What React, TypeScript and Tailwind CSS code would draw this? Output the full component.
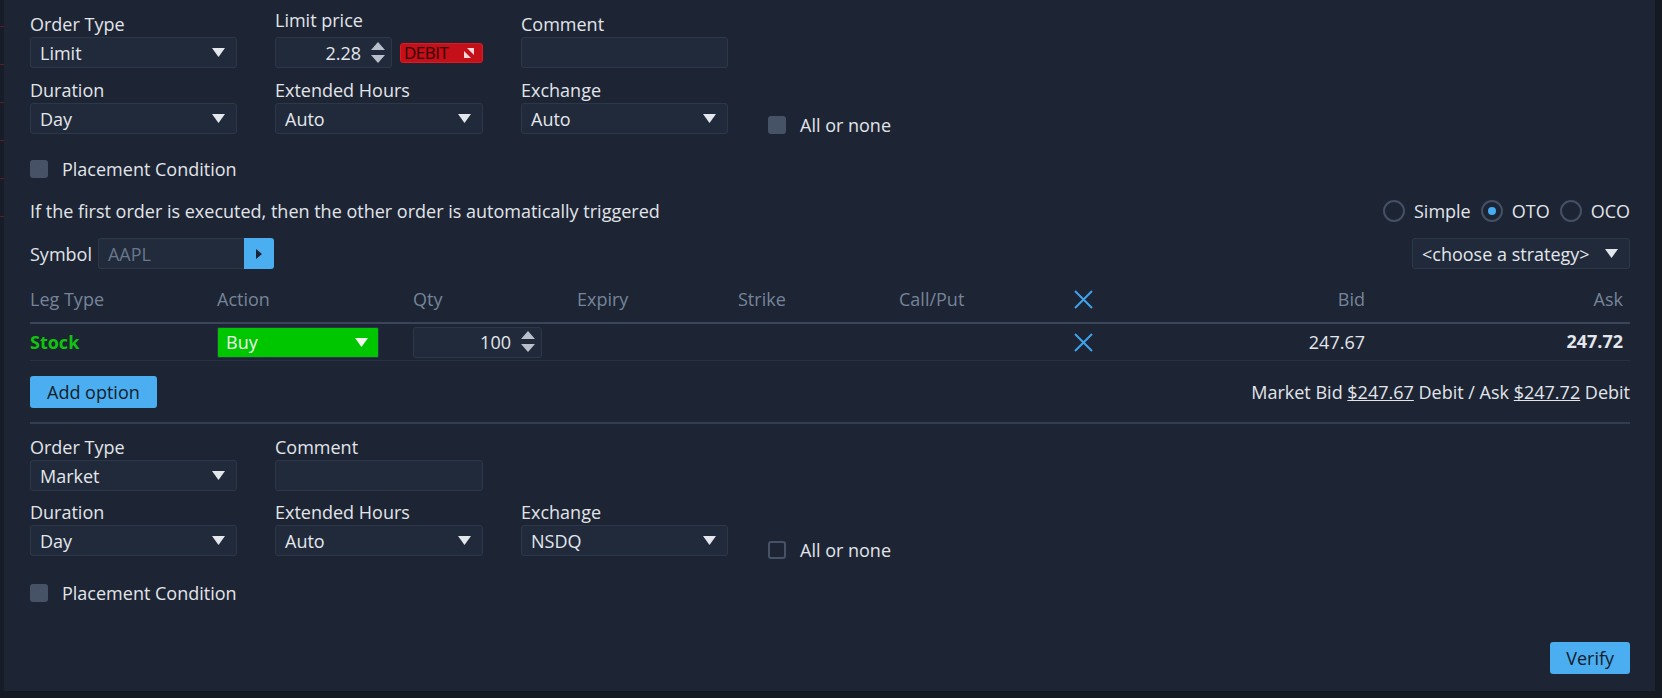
import React from 'react';

const font = "font-['Open_Sans',sans-serif]";

function Caret({ color = '#e3e7ec' }: { color?: string }) {
  return (
    <svg width="13" height="9" viewBox="0 0 13 9">
      <path d="M0 0 L13 0 L6.5 9 Z" fill={color} />
    </svg>
  );
}

function Spinner() {
  return (
    <svg width="14" height="22" viewBox="0 0 14 22" className="shrink-0">
      <path d="M7 0 L14 8 L0 8 Z" fill="#b9c0cb" />
      <path d="M0 13 L14 13 L7 21 Z" fill="#b9c0cb" />
    </svg>
  );
}

function XIcon() {
  return (
    <svg width="21" height="21" viewBox="0 0 21 21">
      <path d="M2 2 L19 19 M19 2 L2 19" stroke="#3ea3ec" strokeWidth="2" fill="none" />
    </svg>
  );
}

function Select({ value, w = 'w-[207px]' }: { value: string; w?: string }) {
  return (
    <div className={`${w} h-[31px] flex items-center justify-between pl-[9px] pr-[11px] bg-[#212a3a] border border-[#2c3748] rounded-[3px] text-[#e3e7ec]`}>
      <span>{value}</span>
      <Caret />
    </div>
  );
}

function TextBox({ w = 'w-[207px]' }: { w?: string }) {
  return <div className={`${w} h-[31px] bg-[#212a3a] border border-[#2c3748] rounded-[3px]`} />;
}

function Field({ label, children, up }: { label: string; children: React.ReactNode; up?: boolean }) {
  return (
    <div className="flex flex-col">
      <div className={`leading-[20px] text-[#e1e5ea] mb-[3px] ${up ? '-mt-[4px] mb-[7px]' : ''}`}>{label}</div>
      {children}
    </div>
  );
}

function Check({ filled = true, label }: { filled?: boolean; label: string }) {
  return (
    <div className="flex items-center gap-[14px] h-[20px]">
      <div
        className={`w-[18px] h-[18px] rounded-[3px] ${filled ? 'bg-[#465266]' : 'border-2 border-[#465266]'}`}
      />
      <span className="text-[#e1e5ea]">{label}</span>
    </div>
  );
}

function Radio({ label, on }: { label: string; on?: boolean }) {
  return (
    <div className="flex items-center gap-[9px]">
      <div className="w-[22px] h-[22px] rounded-full border-2 border-[#435065] flex items-center justify-center">
        {on && <div className="w-[8px] h-[8px] rounded-full bg-[#46adf2]" />}
      </div>
      <span className="text-[#e1e5ea]">{label}</span>
    </div>
  );
}

function Debit() {
  return (
    <div className="w-[83px] h-[20px] flex items-center justify-between pl-[3px] pr-[8px] rounded-[3px] bg-[#c50f19] border border-[#de1a22] text-[#2e0104] text-[17px] leading-[18px] tracking-[-0.5px]">
      <span>DEBIT</span>
      <svg width="10" height="10" viewBox="0 0 10 10">
        <path d="M3 0 H10 V7 Z" fill="#f4d8da" />
        <path d="M0 3 V10 H7 Z" fill="#f4d8da" />
      </svg>
    </div>
  );
}

const grid =
  'grid grid-cols-[187px_196px_164px_161px_161px_174px_21px_271px_1fr] items-center';

export default function App() {
  return (
    <div className={`${font} text-[18px] leading-[22px] w-[1662px] h-[698px] bg-[#141922] flex overflow-hidden`}>
      {/* strip of the chart behind */}
      <div className="w-[4px] h-[691px] bg-[#171d28] flex flex-col pt-[26px] gap-[37px]">
        {[0, 1, 2, 3, 4, 5].map(i => (
          <div key={i} className="h-[1px] w-[4px] bg-[#5a1f26]" />
        ))}
      </div>
      <div className="w-[1651px] h-[691px] bg-[#1d2433] pl-[26px] pr-[25px] pt-[14px] flex flex-col">
        {/* first order */}
        <div className="grid grid-cols-[207px_208px_207px] gap-x-[38px] items-end">
          <Field label="Order Type">
            <Select value="Limit" />
          </Field>
          <Field label="Limit price" up>
            <div className="flex items-center gap-[8px]">
              <div className="w-[117px] h-[31px] flex items-center justify-end gap-[10px] pr-[6px] bg-[#212a3a] border border-[#2c3748] rounded-[3px] text-[#e3e7ec]">
                <span>2.28</span>
                <Spinner />
              </div>
              <Debit />
            </div>
          </Field>
          <Field label="Comment">
            <TextBox />
          </Field>
        </div>
        <div className="flex items-end mt-[12px]">
          <div className="grid grid-cols-[207px_208px_207px] gap-x-[38px]">
            <Field label="Duration">
              <Select value="Day" />
            </Field>
            <Field label="Extended Hours">
              <Select value="Auto" w="w-[208px]" />
            </Field>
            <Field label="Exchange">
              <Select value="Auto" />
            </Field>
          </div>
          <div className="ml-[40px] -mb-[1px]">
            <Check label="All or none" />
          </div>
        </div>
        <div className="mt-[25px]">
          <Check label="Placement Condition" />
        </div>

        {/* OTO */}
        <div className="flex items-center justify-between mt-[21px] h-[22px]">
          <span className="text-[#e1e5ea]">If the first order is executed, then the other order is automatically triggered</span>
          <div className="flex items-center gap-[10px]">
            <Radio label="Simple" />
            <Radio label="OTO" on />
            <Radio label="OCO" />
          </div>
        </div>
        <div className="flex items-center justify-between mt-[16px]">
          <div className="flex items-center gap-[6px]">
            <span className="text-[#e1e5ea]">Symbol</span>
            <div className="flex h-[31px]">
              <div className="w-[146px] flex items-center pl-[9px] bg-[#222b3b] border border-[#2c3748] border-r-0 rounded-l-[3px] text-[#68778b]">
                AAPL
              </div>
              <div className="w-[30px] flex items-center justify-center bg-[#4aaef0] rounded-r-[3px]">
                <svg width="6" height="10" viewBox="0 0 6 10">
                  <path d="M0 0 L6 5 L0 10 Z" fill="#1b2331" />
                </svg>
              </div>
            </div>
          </div>
          <Select value="<choose a strategy>" w="w-[218px]" />
        </div>

        {/* legs table */}
        <div className={`${grid} mt-[15px] h-[30px] text-[#75849a] border-b-2 border-[#394558] box-content pb-[8px]`}>
          <span>Leg Type</span>
          <span>Action</span>
          <span>Qty</span>
          <span>Expiry</span>
          <span>Strike</span>
          <span>Call/Put</span>
          <XIcon />
          <span className="text-right">Bid</span>
          <span className="text-right pr-[7px]">Ask</span>
        </div>
        <div className={`${grid} h-[37px] border-b border-[#283244]`}>
          <span className="text-[#12c40f] font-bold">Stock</span>
          <div>
            <div className="w-[162px] h-[31px] flex items-center justify-between pl-[8px] pr-[10px] bg-[#00c600] border border-[#2c3748] rounded-[2px] text-[#eef6ee]">
              <span>Buy</span>
              <Caret color="#eef6ee" />
            </div>
          </div>
          <div>
            <div className="w-[129px] h-[31px] flex items-center justify-end gap-[10px] pr-[6px] bg-[#212a3a] border border-[#2c3748] rounded-[3px] text-[#e3e7ec]">
              <span>100</span>
              <Spinner />
            </div>
          </div>
          <span />
          <span />
          <span />
          <XIcon />
          <span className="text-right text-[#e3e7ec]">247.67</span>
          <span className="text-right pr-[7px] text-[#e3e7ec] font-bold -mt-[3px]">247.72</span>
        </div>
        <div className="flex items-center justify-between mt-[15px]">
          <button className="h-[32px] px-[17px] bg-[#4aaef0] rounded-[3px] text-[#141c29]">Add option</button>
          <span className="text-[#e1e5ea]">
            Market Bid <span className="underline">$247.67</span> Debit / Ask{' '}
            <span className="underline">$247.72</span> Debit
          </span>
        </div>
        <div className="h-[2px] bg-[#323d4f] mt-[14px]" />

        {/* second order */}
        <div className="grid grid-cols-[207px_208px] gap-x-[38px] mt-[13px]">
          <Field label="Order Type">
            <Select value="Market" />
          </Field>
          <Field label="Comment">
            <TextBox w="w-[208px]" />
          </Field>
        </div>
        <div className="flex items-end mt-[11px]">
          <div className="grid grid-cols-[207px_208px_207px] gap-x-[38px]">
            <Field label="Duration">
              <Select value="Day" />
            </Field>
            <Field label="Extended Hours">
              <Select value="Auto" w="w-[208px]" />
            </Field>
            <Field label="Exchange">
              <Select value="NSDQ" />
            </Field>
          </div>
          <div className="ml-[40px] -mb-[4px]">
            <Check label="All or none" filled={false} />
          </div>
        </div>
        <div className="mt-[27px]">
          <Check label="Placement Condition" />
        </div>
        <div className="flex justify-end mt-[39px]">
          <button className="h-[32px] px-[16px] bg-[#4aaef0] rounded-[3px] text-[#141c29]">Verify</button>
        </div>
      </div>
    </div>
  );
}
